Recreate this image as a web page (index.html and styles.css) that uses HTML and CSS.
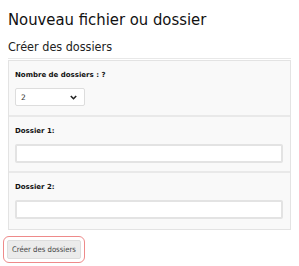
FILE: index.html
```html
<!DOCTYPE html>
<html lang="fr">
<head>
  <meta charset="UTF-8">
  <title>Nouveau fichier ou dossier</title>
  <link rel="stylesheet" href="styles.css">
</head>
<body>

  <h1 class="page-title">Nouveau fichier ou dossier</h1>

  <h2 class="section-title">Créer des dossiers</h2>

  <form class="create-form">
    <div class="panel">
      <div class="panel-row">
        <label for="folder-count">Nombre de dossiers : ?</label>
        <span class="select-wrap">
          <select id="folder-count">
            <option>1</option>
            <option selected>2</option>
            <option>3</option>
            <option>4</option>
            <option>5</option>
          </select>
          <svg class="chevron" width="7" height="5" viewBox="0 0 7 5">
            <path d="M0.8 1 L3.5 3.7 L6.2 1" fill="none" stroke="#222" stroke-width="1.6"/>
          </svg>
        </span>
      </div>

      <div class="panel-row">
        <label for="folder-1">Dossier 1:</label>
        <input type="text" id="folder-1">
      </div>

      <div class="panel-row">
        <label for="folder-2">Dossier 2:</label>
        <input type="text" id="folder-2">
      </div>
    </div>

    <div class="actions">
      <button type="button" class="btn-focus">Créer des dossiers</button>
    </div>
  </form>

</body>
</html>
```

FILE: styles.css
```css
* {
  box-sizing: border-box;
}

body {
  margin: 0;
  padding: 8px;
  background: #ffffff;
  color: #222222;
  font-family: 'DejaVu Sans', Verdana, sans-serif;
}

.page-title {
  margin: 2px 0 0;
  font-family: 'DejaVu Sans Condensed', 'DejaVu Sans', sans-serif;
  font-stretch: condensed;
  font-size: 16.5px;
  font-weight: normal;
  line-height: 20px;
  color: #111111;
}

.section-title {
  margin: 9px 0 0;
  padding-bottom: 3px;
  border-bottom: 1px solid #e8e8e8;
  font-family: 'DejaVu Sans Condensed', 'DejaVu Sans', sans-serif;
  font-stretch: condensed;
  font-size: 12.5px;
  font-weight: normal;
  line-height: 16px;
  color: #222222;
}

.create-form {
  margin: 1px 0 0;
}

.panel {
  background: #f9f9f9;
  border: 1px solid #e3e3e3;
}

.panel-row {
  display: flex;
  flex-direction: column;
  align-items: flex-start;
  gap: 8px;
  height: 56px;
  padding: 9px 7px 0 6px;
  border-bottom: 2px solid #e9e9e9;
}

.panel-row:last-child {
  border-bottom: none;
}

.panel-row label {
  font-size: 7px;
  font-weight: bold;
  line-height: 10px;
  color: #111111;
}

.select-wrap {
  position: relative;
  display: flex;
}

.select-wrap select {
  appearance: none;
  -webkit-appearance: none;
  width: 70px;
  height: 18px;
  padding: 0 0 0 5px;
  border: 1px solid #dddddd;
  border-radius: 2px;
  background: #ffffff;
  font-family: 'DejaVu Sans', sans-serif;
  font-size: 7.5px;
  color: #333333;
  outline: none;
}

.chevron {
  position: absolute;
  right: 8px;
  top: 7px;
  pointer-events: none;
}

.panel-row input {
  width: 100%;
  height: 19px;
  border: 2px solid #e3e3e3;
  border-radius: 2px;
  background: #ffffff;
  outline: none;
}

.actions {
  display: flex;
  padding: 10px 0 0;
}

button {
  height: 19px;
  margin-left: -1px;
  padding: 0 4px;
  background: #ebebeb;
  border: 1px solid #dddddd;
  border-radius: 2px;
  font-family: 'DejaVu Sans Condensed', 'DejaVu Sans', sans-serif;
  font-stretch: condensed;
  font-size: 7.7px;
  color: #444444;
  cursor: pointer;
}

.btn-focus {
  outline: 1px solid #ee8a8a;
  outline-offset: 3px;
}
```
